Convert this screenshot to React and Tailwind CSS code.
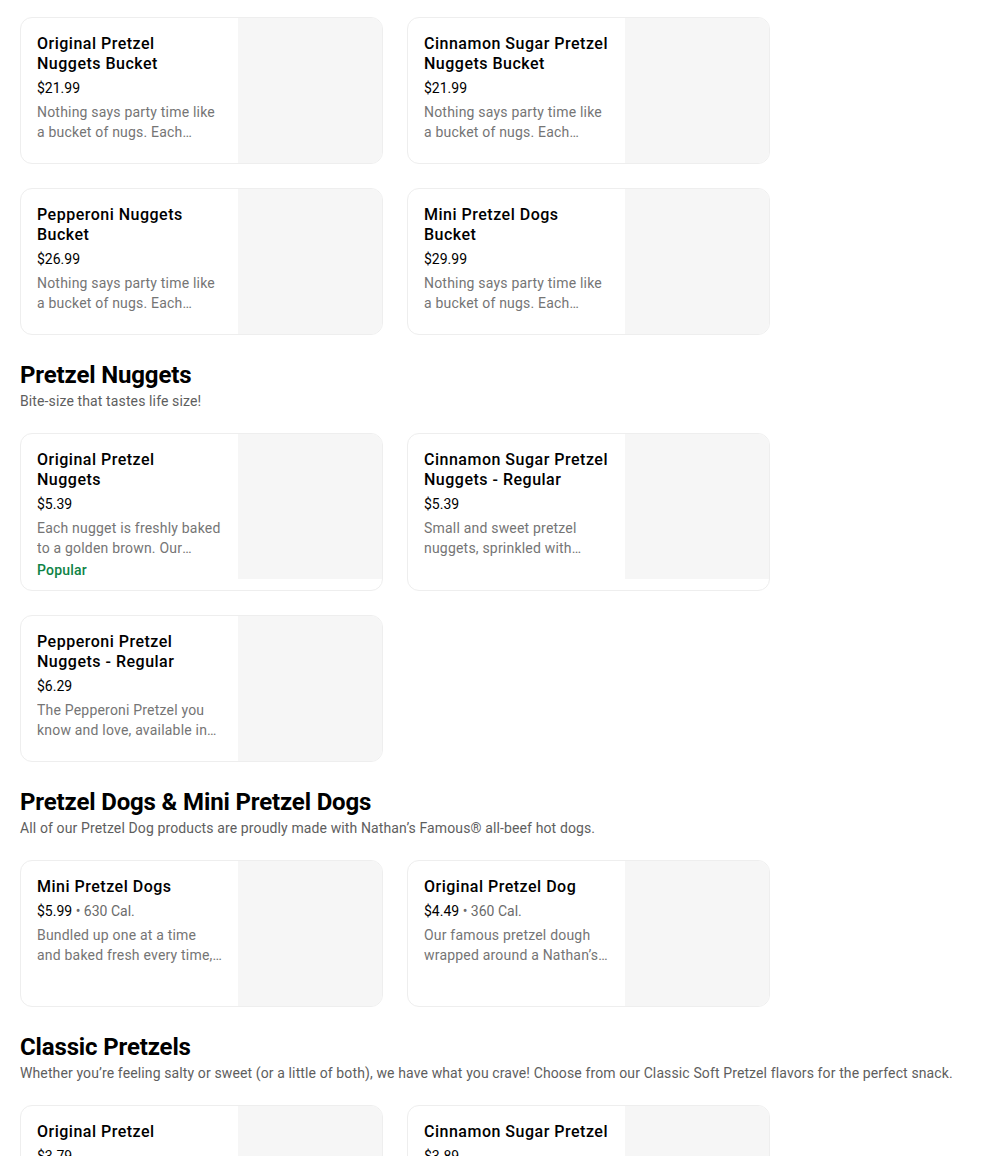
import React from "react";

const sections = [
  {
    items: [
      {
        name: "Original Pretzel Nuggets Bucket",
        price: "$21.99",
        desc: "Nothing says party time like a bucket of nugs. Each bucket is filled with freshly baked pretzel nuggets.",
      },
      {
        name: "Cinnamon Sugar Pretzel Nuggets Bucket",
        price: "$21.99",
        desc: "Nothing says party time like a bucket of nugs. Each bucket is filled with freshly baked pretzel nuggets.",
      },
      {
        name: "Pepperoni Nuggets Bucket",
        price: "$26.99",
        desc: "Nothing says party time like a bucket of nugs. Each bucket is filled with freshly baked pretzel nuggets.",
      },
      {
        name: "Mini Pretzel Dogs Bucket",
        price: "$29.99",
        desc: "Nothing says party time like a bucket of nugs. Each bucket is filled with freshly baked mini pretzel dogs.",
      },
    ],
  },
  {
    title: "Pretzel Nuggets",
    subtitle: "Bite-size that tastes life size!",
    items: [
      {
        name: "Original Pretzel Nuggets",
        price: "$5.39",
        desc: "Each nugget is freshly baked to a golden brown. Our nuggets are perfect for sharing or snacking.",
        popular: true,
      },
      {
        name: "Cinnamon Sugar Pretzel Nuggets - Regular",
        price: "$5.39",
        desc: "Small and sweet pretzel nuggets, sprinkled with cinnamon sugar and baked to perfection.",
      },
      {
        name: "Pepperoni Pretzel Nuggets - Regular",
        price: "$6.29",
        desc: "The Pepperoni Pretzel you know and love, available in bite-size nuggets.",
      },
    ],
  },
  {
    title: "Pretzel Dogs & Mini Pretzel Dogs",
    subtitle:
      "All of our Pretzel Dog products are proudly made with Nathan’s Famous® all-beef hot dogs.",
    items: [
      {
        name: "Mini Pretzel Dogs",
        price: "$5.99",
        cal: "630 Cal.",
        desc: "Bundled up one at a time and baked fresh every time, our mini pretzel dogs are the perfect snack.",
      },
      {
        name: "Original Pretzel Dog",
        price: "$4.49",
        cal: "360 Cal.",
        desc: "Our famous pretzel dough wrapped around a Nathan’s Famous all-beef hot dog.",
      },
    ],
  },
  {
    title: "Classic Pretzels",
    subtitle:
      "Whether you’re feeling salty or sweet (or a little of both), we have what you crave! Choose from our Classic Soft Pretzel flavors for the perfect snack.",
    items: [
      {
        name: "Original Pretzel",
        price: "$3.79",
        desc: "Our signature soft pretzel, hand-rolled and baked fresh to a golden brown.",
      },
      {
        name: "Cinnamon Sugar Pretzel",
        price: "$3.89",
        desc: "Our soft pretzel dipped in butter and rolled in cinnamon sugar.",
      },
    ],
  },
];

function ItemCard({ item }) {
  return (
    <div className="flex rounded-xl border border-[#eeeeee] bg-white overflow-hidden">
      <div className="flex-1 min-w-0 pt-4 pb-[10px] px-4 min-h-[145px]">
        <div className="text-[16px] leading-5 font-medium text-black tracking-[0.5px]">
          {item.name}
        </div>
        <div className="mt-1 text-[14px] leading-5 text-black">
          {item.price}
          {item.cal && <span className="text-[#6b6b6b]"> • {item.cal}</span>}
        </div>
        <div className="mt-1 text-[14px] leading-5 text-[#757575] tracking-[0.2px] line-clamp-2">
          {item.desc}
        </div>
        {item.popular && (
          <div className="mt-[2px] text-[14px] leading-5 font-medium text-[#0e8345] tracking-[0.2px]">
            Popular
          </div>
        )}
      </div>
      <div className="w-[144px] h-[145px] shrink-0 bg-[#f6f6f6]" />
    </div>
  );
}

export default function App() {
  return (
    <div className="bg-white min-h-screen px-5 pt-[17px] pb-10 font-['Roboto',sans-serif]">
      {sections.map((s, i) => (
        <section key={i} className={i === 0 ? "" : "mt-6"}>
          {s.title && (
            <div className="mb-[22px]">
              <h2 className="text-[24px] leading-8 font-bold text-black tracking-[-0.15px]">
                {s.title}
              </h2>
              <p className="text-[14px] leading-5 text-[#5e5e5e] tracking-[0.12px]">
                {s.subtitle}
              </p>
            </div>
          )}
          <div className="grid grid-cols-[363px_363px] gap-6">
            {s.items.map((item) => (
              <ItemCard key={item.name} item={item} />
            ))}
          </div>
        </section>
      ))}
    </div>
  );
}
